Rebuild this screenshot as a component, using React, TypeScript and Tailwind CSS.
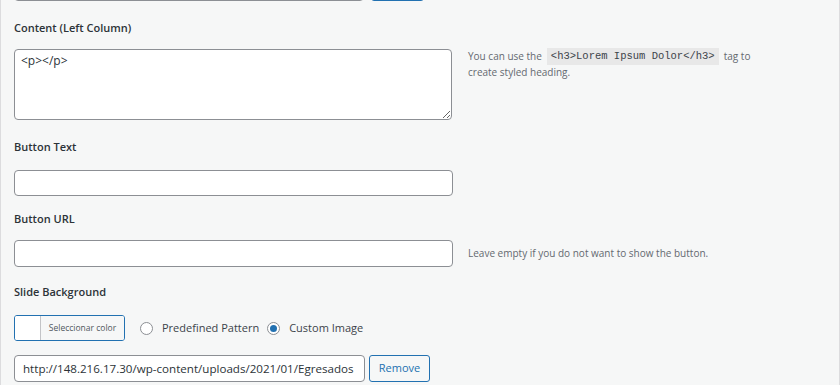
const font = { fontFamily: '"Open Sans", "Noto Sans", sans-serif' };

function Label({ children }: { children: React.ReactNode }) {
  return (
    <div className="text-[11px] font-semibold leading-[16px] text-[#2c3338]">
      {children}
    </div>
  );
}

function Radio({ checked }: { checked?: boolean }) {
  return (
    <span className="flex h-[13px] w-[13px] shrink-0 items-center justify-center rounded-full border border-[#8c8f94] bg-white">
      {checked && <span className="h-[7px] w-[7px] rounded-full bg-[#2271b1]" />}
    </span>
  );
}

export default function App() {
  return (
    <div
      className="h-[385px] w-[840px] overflow-hidden border-x border-[#dcdcde] bg-[#f6f7f7] pl-[13px]"
      style={font}
    >
      {/* tail of the previous field */}
      <div className="mt-[-25px] flex gap-[7px]">
        <div className="h-[26px] w-[350px] rounded-[4px] border border-[#8c8f94] bg-white" />
        <div className="h-[26px] w-[53px] rounded-[3px] border border-[#2271b1] bg-[#f6f7f7]" />
      </div>

      <div className="mt-[19px]">
        <Label>Content (Left Column)</Label>
      </div>
      <div className="mt-[13px] flex items-start">
        <textarea
          readOnly
          defaultValue="<p></p>"
          className="h-[71px] w-[438px] resize rounded-[4px] border border-[#8c8f94] bg-white px-[6px] py-[2px] text-[12px] leading-[18px] text-[#2c3338] outline-none"
          style={font}
        />
        <div className="ml-[16px] mt-[-1px] text-[10px] leading-[15px] text-[#646970]">
          <div className="flex items-center">
            You can use the
            <code
              className="mx-[5px] bg-[#e8e8e8] px-[4px] py-[1px] text-[10.5px] leading-[15px] text-[#3c434a]"
              style={{ fontFamily: '"Liberation Mono", monospace' }}
            >
              {"<h3>Lorem Ipsum Dolor</h3>"}
            </code>
            tag to
          </div>
          <div>create styled heading.</div>
        </div>
      </div>

      <div className="mt-[19px]">
        <Label>Button Text</Label>
      </div>
      <div className="mt-[15px] h-[26px] w-[439px] rounded-[4px] border border-[#8c8f94] bg-white" />

      <div className="mt-[15px]">
        <Label>Button URL</Label>
      </div>
      <div className="mt-[13px] flex items-center">
        <div className="h-[27px] w-[439px] rounded-[4px] border border-[#8c8f94] bg-white" />
        <div className="ml-[15px] text-[10px] leading-[15px] text-[#646970]">
          Leave empty if you do not want to show the button.
        </div>
      </div>

      <div className="mt-[17px]">
        <Label>Slide Background</Label>
      </div>
      <div className="mt-[15px] flex items-center">
        <div className="flex h-[26px] w-[111px] overflow-hidden rounded-[3px] border border-[#2271b1] bg-white">
          <div className="w-[26px] border-r border-[#c3c4c7] bg-white" />
          <div className="flex flex-1 items-center justify-center bg-[#f6f7f7] text-[8.5px] text-[#50575e]">
            Seleccionar color
          </div>
        </div>
        <div className="ml-[15px] flex items-center gap-[9px] text-[11px] text-[#3c434a]">
          <Radio />
          <span>Predefined Pattern</span>
        </div>
        <div className="ml-[8px] flex items-center gap-[9px] text-[11px] text-[#3c434a]">
          <Radio checked />
          <span>Custom Image</span>
        </div>
      </div>

      <div className="mt-[14px] flex items-center gap-[4px]">
        <div className="flex h-[27px] w-[351px] items-center overflow-hidden rounded-[4px] border border-[#8c8f94] bg-white px-[8px] text-[11.6px] whitespace-nowrap text-[#2c3338]">
          http://148.216.17.30/wp-content/uploads/2021/01/Egresados
        </div>
        <div className="flex h-[27px] w-[61px] items-center justify-center rounded-[3px] border border-[#2271b1] bg-[#f6f7f7] text-[11px] text-[#2271b1]">
          Remove
        </div>
      </div>
    </div>
  );
}
